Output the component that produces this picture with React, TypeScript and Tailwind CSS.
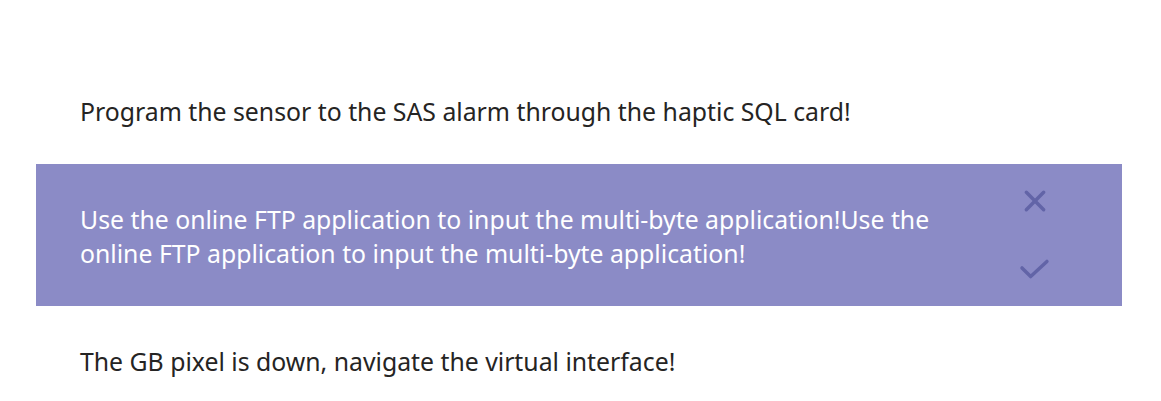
export default function App() {
  const rows = [
    { text: 'Program the sensor to the SAS alarm through the haptic SQL card!', active: false },
    {
      text: 'Use the online FTP application to input the multi-byte application!Use the online FTP application to input the multi-byte application!',
      active: true,
    },
    { text: 'The GB pixel is down, navigate the virtual interface!', active: false },
  ]

  return (
    <div className="w-[1161px] h-[401px] bg-white pt-[56px] pl-[36px] pr-[39px] font-['Segoe_UI','Noto_Sans',sans-serif] overflow-hidden">
      {rows.map((r, i) => (
        <div
          key={i}
          className={
            r.active
              ? 'flex items-center bg-[#8b8bc6] text-white pl-[44px]'
              : 'flex items-center text-[#252423] pl-[44px]'
          }
        >
          <div className="w-[890px] pt-[38px] pb-[36px] text-[24.8px] leading-[34px]">{r.text}</div>
          {r.active && (
            <div className="flex flex-col items-center gap-[42px] ml-auto mr-[69px] text-[#6264a7]">
              <svg width="26" height="26" viewBox="0 0 24 24" fill="none" stroke="currentColor" strokeWidth="3.2" strokeLinecap="round">
                <path d="M4 4 L20 20 M20 4 L4 20" />
              </svg>
              <svg width="36" height="26" viewBox="0 0 32 24" fill="none" stroke="currentColor" strokeWidth="3.2" strokeLinecap="round" strokeLinejoin="round">
                <path d="M4 11 L12 19 L27 5" />
              </svg>
            </div>
          )}
        </div>
      ))}
    </div>
  )
}
